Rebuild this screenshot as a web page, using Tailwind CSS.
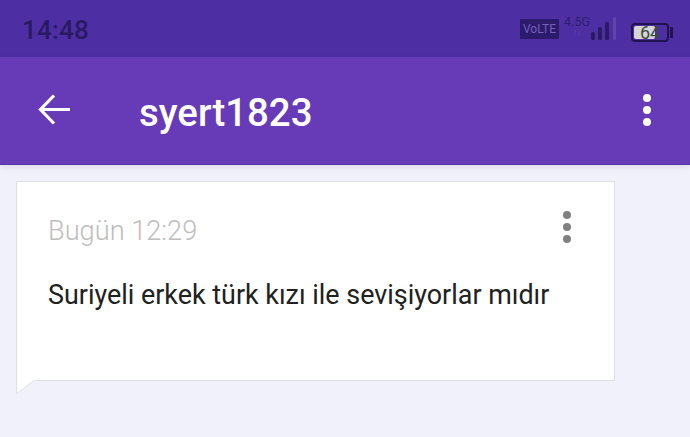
<!DOCTYPE html>
<html lang="en">
<head>
    <meta charset="UTF-8">
    <title>syert1823</title>
    <script src="https://cdn.jsdelivr.net/npm/@tailwindcss/browser@4"></script>
</head>
<body class="w-[690px] h-[437px] overflow-hidden bg-[#f0f1fa] font-['Roboto',sans-serif]">
    <!-- status bar -->
    <div class="h-[57px] bg-[#4d2fa3] flex items-center pl-[22px] pr-[17px]">
        <span class="text-[26px] leading-none font-medium text-[#2a1a63] tracking-[0.2px] mt-[3px]">14:48</span>
        <div class="ml-auto flex items-center">
            <span class="w-[39px] h-[20px] bg-[#2c1a6b] rounded-[1px] text-[12px] leading-[20px] text-center text-[#7361bd] mt-[1px]">VoLTE</span>
            <div class="w-[26px] ml-[5px] flex flex-col items-center text-[#2f1d70]">
                <span class="text-[12.5px] leading-[13px] -mt-[4px]">4.5G</span>
                <span class="text-[8px] leading-[10px] text-[#5f46ad]">↑↓</span>
            </div>
            <svg class="mt-[1px]" width="28" height="26" viewBox="0 0 28 26">
                <rect x="1" y="16" width="4" height="8" rx="1.5" fill="#2a1a63"/>
                <rect x="8" y="11" width="4" height="13" rx="1.5" fill="#2a1a63"/>
                <rect x="15" y="6" width="4" height="18" rx="1.5" fill="#2a1a63"/>
                <rect x="23" y="1" width="3" height="23" rx="1.5" fill="#5f46ad"/>
            </svg>
            <div class="ml-[13px] mt-[8px] flex items-center">
                <div class="relative w-[38px] h-[19px] border-2 border-[#20124f] rounded-[4px] p-[1px]">
                    <div class="w-[21px] h-full bg-[#d6d6d6] rounded-[2px]"></div>
                    <span class="absolute inset-0 text-center text-[18px] leading-[15px] text-[#3f4a3f]">64</span>
                </div>
                <div class="w-[3px] h-[11px] ml-[1px] bg-[#20124f] rounded-r-[1px]"></div>
            </div>
        </div>
    </div>

    <!-- app bar -->
    <div class="h-[108px] bg-[#673ab7] border-b border-[#5a32a8] flex items-center pl-[38px] pr-[39px] shadow-[0_2px_6px_rgba(60,40,120,0.12)]">
        <svg width="33" height="33" viewBox="0 0 33 33" fill="none" stroke="#ffffff" stroke-width="3.2" class="mt-[-2px]">
            <path d="M32 16.5H3M16 2.5L2.5 16.5L16 30.5"/>
        </svg>
        <h1 class="ml-[68px] mt-[6px] text-[38.4px] leading-none font-medium text-white">syert1823</h1>
        <div class="ml-auto flex flex-col gap-[4px] mt-[-2px]">
            <span class="w-[8px] h-[8px] rounded-full bg-white"></span>
            <span class="w-[8px] h-[8px] rounded-full bg-white"></span>
            <span class="w-[8px] h-[8px] rounded-full bg-white"></span>
        </div>
    </div>

    <!-- message bubble -->
    <div class="relative ml-[16px] mt-[16px] w-[599px] h-[200px] bg-white border border-[#dfdfe3] pl-[31px] pr-[43px] pt-[34px]">
        <div class="flex items-start justify-between">
            <span class="text-[27.2px] leading-[30px] font-light text-[#bdbdbd]">Bugün 12:29</span>
            <div class="flex flex-col gap-[4px] -mt-[5px]">
                <span class="w-[8px] h-[8px] rounded-full bg-[#808080]"></span>
                <span class="w-[8px] h-[8px] rounded-full bg-[#808080]"></span>
                <span class="w-[8px] h-[8px] rounded-full bg-[#808080]"></span>
            </div>
        </div>
        <p class="mt-[34px] text-[26.9px] leading-[30px] text-[#212121]">Suriyeli erkek türk kızı ile sevişiyorlar mıdır</p>
        <svg class="absolute left-[-1px] top-[197px]" width="26" height="18" viewBox="0 0 26 18">
            <path d="M1 0H24V2H20Q18 2 16 3.5L1 15Z" fill="#ffffff"/>
            <path d="M0.5 0V15L16 3Q18 1.5 20 1.5H26" fill="none" stroke="#dfdfe3"/>
        </svg>
    </div>
</body>
</html>
